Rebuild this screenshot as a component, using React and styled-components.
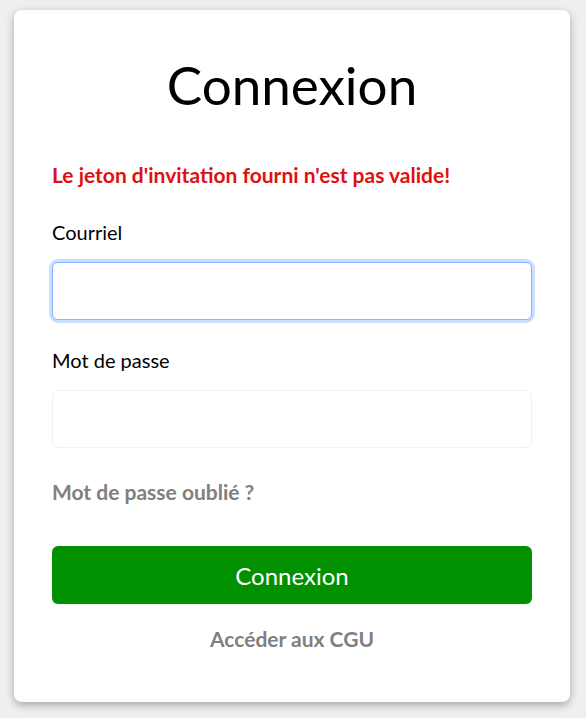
import React from "react";
import styled, { createGlobalStyle } from "styled-components";

const GlobalStyle = createGlobalStyle`
  html, body {
    margin: 0;
    padding: 0;
    background-color: #efefef;
  }
  body {
    font-family: "Lato", "Noto Sans", sans-serif;
  }
`;

const Page = styled.main`
  padding: 10px 16px 16px 14px;
`;

const Card = styled.section`
  box-sizing: border-box;
  width: 556px;
  height: 692px;
  padding: 38px 38px 0;
  background-color: #fff;
  border-radius: 8px;
  box-shadow: 0 3px 8px rgba(0, 0, 0, 0.3);
`;

const Title = styled.h1`
  margin: 0 0 41px;
  text-align: center;
  font-size: 53px;
  font-weight: 400;
  line-height: 74px;
  color: #000;
`;

const ErrorText = styled.p`
  margin: 0 0 33px;
  font-size: 21px;
  font-weight: 700;
  line-height: 24px;
  color: #e01010;
`;

const Form = styled.form`
  display: flex;
  flex-direction: column;
`;

const Label = styled.label`
  display: block;
  margin-bottom: 18px;
  font-size: 20px;
  line-height: 24px;
  color: #000;
`;

const Field = styled.div`
  margin-bottom: ${({ $last }) => ($last ? "32px" : "28px")};
`;

const Input = styled.input`
  box-sizing: border-box;
  display: block;
  width: 100%;
  height: 58px;
  padding: 0 14px;
  font: inherit;
  font-size: 20px;
  background-color: #fff;
  border-radius: 6px;
  outline: none;
  border: 1px solid ${({ $focused }) => ($focused ? "#86b7fe" : "#f1f1f1")};
  box-shadow: ${({ $focused }) =>
    $focused ? "0 0 0 3px rgba(13, 110, 253, 0.22)" : "none"};
`;

const ForgotLink = styled.a`
  display: block;
  margin-bottom: 42px;
  font-size: 21px;
  font-weight: 700;
  line-height: 24px;
  color: #808080;
  text-decoration: none;
`;

const SubmitButton = styled.button`
  display: block;
  width: 100%;
  height: 58px;
  margin-bottom: 23px;
  font: inherit;
  font-size: 24px;
  color: #fff;
  background-color: #009000;
  border: none;
  border-radius: 6px;
  cursor: pointer;
`;

const TermsLink = styled.a`
  display: block;
  text-align: center;
  font-size: 21px;
  font-weight: 700;
  line-height: 24px;
  color: #808080;
  text-decoration: none;
`;

function App() {
  return (
    <>
      <GlobalStyle />
      <Page>
        <Card>
          <Title>Connexion</Title>
          <ErrorText>Le jeton d'invitation fourni n'est pas valide!</ErrorText>
          <Form onSubmit={(e) => e.preventDefault()}>
            <Field>
              <Label htmlFor="email">Courriel</Label>
              <Input id="email" type="email" $focused />
            </Field>
            <Field $last>
              <Label htmlFor="password">Mot de passe</Label>
              <Input id="password" type="password" />
            </Field>
            <ForgotLink href="#">Mot de passe oublié ?</ForgotLink>
            <SubmitButton type="submit">Connexion</SubmitButton>
            <TermsLink href="#">Accéder aux CGU</TermsLink>
          </Form>
        </Card>
      </Page>
    </>
  );
}

export default App;
